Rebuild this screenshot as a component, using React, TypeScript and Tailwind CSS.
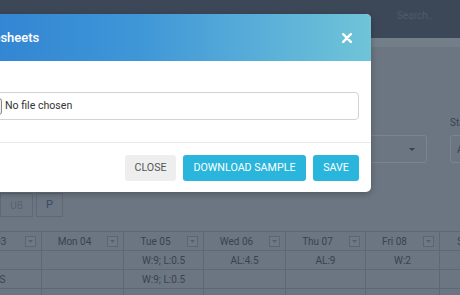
import React from "react";

const FilterIcon = () => (
  <span className="w-[11px] h-[11px] mr-[5px] border border-[#5c6672] bg-[#6f7985] flex items-center justify-center shrink-0">
    <svg width="5" height="3" viewBox="0 0 5 3">
      <path d="M0 0 L5 0 L2.5 3 Z" fill="#56606c" />
    </svg>
  </span>
);

const cols = [
  { w: "w-[85px]", head: "Sun 03" },
  { w: "w-[82px]", head: "Mon 04" },
  { w: "w-[80px]", head: "Tue 05" },
  { w: "w-[82px]", head: "Wed 06" },
  { w: "w-[80px]", head: "Thu 07" },
  { w: "w-[74px]", head: "Fri 08" },
  { w: "w-[80px]", head: "Sat 09" },
];

const rows: string[][] = [
  ["", "", "W:9; L:0.5", "AL:4.5", "AL:9", "W:2", ""],
  ["NS", "", "W:9; L:0.5", "", "", "", ""],
  ["", "", "", "", "", "", ""],
];

export default function App() {
  return (
    <div className="relative w-[460px] h-[295px] overflow-hidden bg-[#6b7682] font-['Roboto',sans-serif]">
      {/* Page behind the dialog */}
      <header className="h-[38px] bg-[#3c4858] flex items-start justify-end pr-[27px] pt-[9px]">
        <span className="text-[10px] leading-[14px] text-[#4f5a69] w-[36px] overflow-hidden whitespace-nowrap">Search...</span>
      </header>
      <div className="h-[9px] bg-[#747e89]" />

      <div className="flex flex-col">
        <div className="flex items-end gap-[23px] pl-[327px] mt-[69px]">
          <div className="w-[100px] shrink-0 h-[28px] border border-[#7b848f] rounded-[3px] flex items-center justify-end pr-[11px]">
            <svg width="6" height="3" viewBox="0 0 6 3">
              <path d="M0 0 L6 0 L3 3 Z" fill="#3a434e" />
            </svg>
          </div>
          <div className="flex flex-col gap-[5px] shrink-0">
            <span className="h-[14px] text-[10px] leading-[14px] text-[#3a434f]">Status</span>
            <div className="w-[100px] h-[28px] border border-[#7b848f] rounded-[3px] flex items-center pl-[6px]">
              <span className="text-[10px] text-[#3a434f]">All</span>
            </div>
          </div>
        </div>

        <div className="flex gap-[3px] mt-[30px]">
          <div className="w-[33px] h-[24px] border border-[#5f6975] flex items-center justify-center text-[10px] text-[#59636f]">UB</div>
          <div className="w-[27px] h-[24px] border border-[#5f6975] flex items-center justify-center text-[11px] text-[#3b4768]">P</div>
        </div>

        <div className="mt-[14px] ml-[-43px] border-t border-[#5e6874] text-[10px] text-[#39424e]">
          <div className="flex h-[19px] border-b border-[#5e6874]">
            {cols.map((c, i) => (
              <div key={i} className={`${c.w} shrink-0 flex items-center border-r border-[#5e6874]`}>
                <span className="flex-1 text-center whitespace-nowrap">{c.head}</span>
                <FilterIcon />
              </div>
            ))}
          </div>
          {rows.map((r, ri) => (
            <div key={ri} className="flex h-[19px] border-b border-[#5e6874]">
              {cols.map((c, i) => (
                <div key={i} className={`${c.w} shrink-0 flex items-center justify-center border-r border-[#5e6874] whitespace-nowrap`}>
                  {r[i]}
                </div>
              ))}
            </div>
          ))}
        </div>
      </div>

      {/* Dialog */}
      <div className="absolute left-[-96px] top-[14px] w-[467px] rounded-[5px] overflow-hidden bg-white shadow-[0_2px_6px_rgba(0,0,0,0.25)]">
        <div className="h-[47px] bg-gradient-to-r from-[#2a7bd0] via-[#3f96d7] to-[#70c4d8] flex items-center justify-between pl-[25px] pr-[19px]">
          <span className="text-[13px] font-medium text-white whitespace-nowrap">Import Timesheets</span>
          <svg width="10" height="10" viewBox="0 0 10 10">
            <path d="M1.2 1.2 L8.8 8.8 M8.8 1.2 L1.2 8.8" stroke="white" strokeWidth="2.4" strokeLinecap="round" />
          </svg>
        </div>
        <div className="px-[12px] pt-[31px] pb-[22px]">
          <div className="h-[28px] border border-[#d3d3d3] rounded-[4px] flex items-center">
            <div className="ml-[3px] w-[82px] h-[17px] border border-[#8a8a8a] rounded-[3px] bg-[#efefef] flex items-center justify-center text-[10px] text-[#222]">
              Choose File
            </div>
            <span className="ml-[3px] text-[10.6px] text-[#333]">No file chosen</span>
          </div>
        </div>
        <div className="border-t border-[#e9e9e9] flex justify-end gap-[7px] pt-[12px] pb-[11px] pr-[12px]">
          <button className="w-[51px] h-[26px] rounded-[3px] bg-[#eeeeee] text-[10.7px] text-[#555] flex items-center justify-center">CLOSE</button>
          <button className="w-[123px] h-[26px] rounded-[3px] bg-[#29b5dc] text-[10.7px] text-white flex items-center justify-center whitespace-nowrap">DOWNLOAD SAMPLE</button>
          <button className="w-[46px] h-[26px] rounded-[3px] bg-[#29b5dc] text-[10.7px] text-white flex items-center justify-center">SAVE</button>
        </div>
      </div>
    </div>
  );
}
